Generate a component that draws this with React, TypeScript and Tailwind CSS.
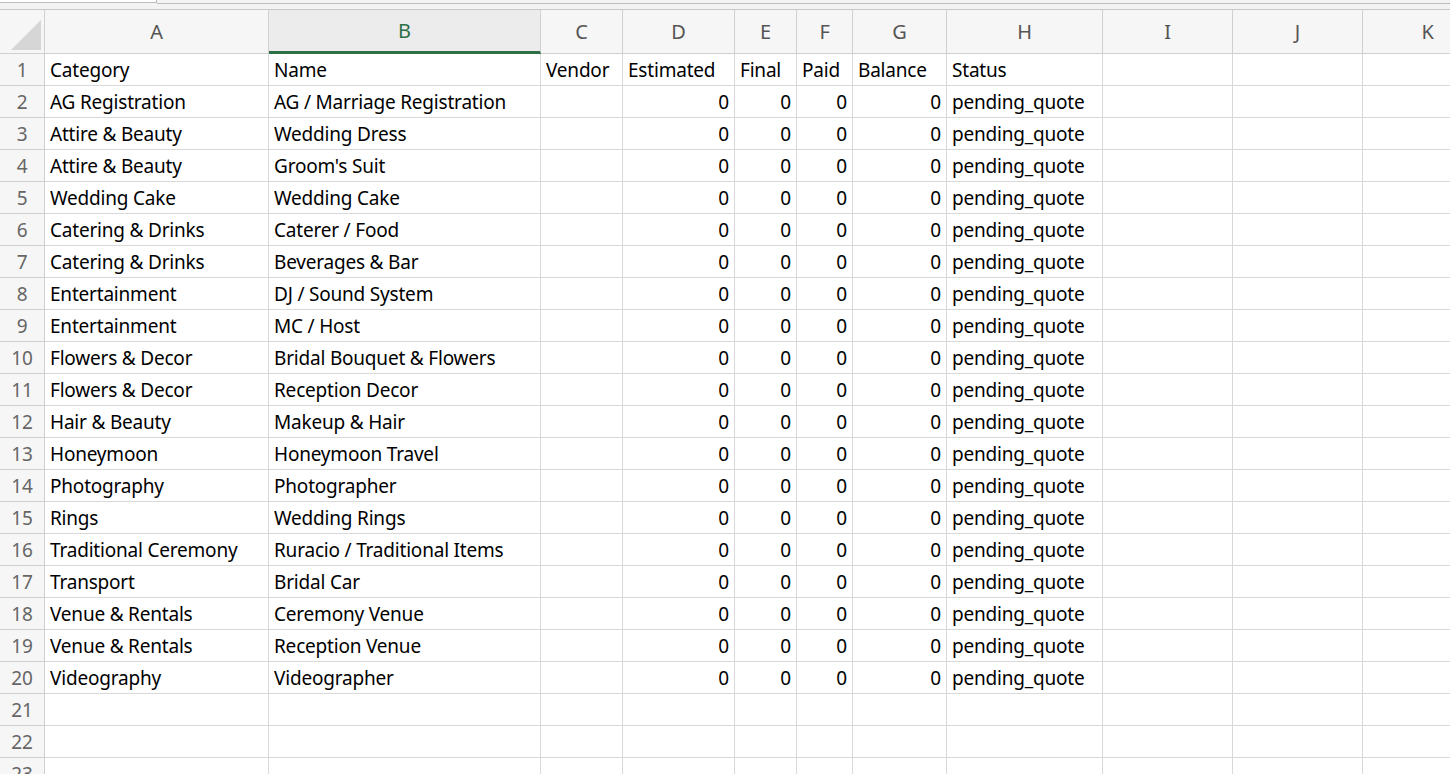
import React from 'react';

const rows: [string, string][] = [
  ['AG Registration', 'AG / Marriage Registration'],
  ['Attire & Beauty', 'Wedding Dress'],
  ['Attire & Beauty', "Groom's Suit"],
  ['Wedding Cake', 'Wedding Cake'],
  ['Catering & Drinks', 'Caterer / Food'],
  ['Catering & Drinks', 'Beverages & Bar'],
  ['Entertainment', 'DJ / Sound System'],
  ['Entertainment', 'MC / Host'],
  ['Flowers & Decor', 'Bridal Bouquet & Flowers'],
  ['Flowers & Decor', 'Reception Decor'],
  ['Hair & Beauty', 'Makeup & Hair'],
  ['Honeymoon', 'Honeymoon Travel'],
  ['Photography', 'Photographer'],
  ['Rings', 'Wedding Rings'],
  ['Traditional Ceremony', 'Ruracio / Traditional Items'],
  ['Transport', 'Bridal Car'],
  ['Venue & Rentals', 'Ceremony Venue'],
  ['Venue & Rentals', 'Reception Venue'],
  ['Videography', 'Videographer'],
];

const cols = ['A', 'B', 'C', 'D', 'E', 'F', 'G', 'H', 'I', 'J', 'K'];
const grid = 'grid grid-cols-[45px_224px_272px_82px_112px_62px_56px_94px_156px_130px_130px_130px]';
const cell = 'h-8 border-r border-b border-[#d9d9d9] px-[5px] leading-[33px] whitespace-nowrap overflow-hidden';
const rowHead = 'h-8 border-r border-b border-[#d0d0d0] bg-[#f6f6f6] text-[#666] text-center leading-[33px]';

const App: React.FC = () => {
  const all: string[][] = [
    ['Category', 'Name', 'Vendor', 'Estimated', 'Final', 'Paid', 'Balance', 'Status', '', '', ''],
    ...rows.map(([c, n]) => [c, n, '', '0', '0', '0', '0', 'pending_quote', '', '', '']),
    ['', '', '', '', '', '', '', '', '', '', ''],
    ['', '', '', '', '', '', '', '', '', '', ''],
    ['', '', '', '', '', '', '', '', '', '', ''],
  ];
  return (
    <div className="w-[1450px] h-[774px] overflow-hidden bg-white text-[19px] text-black font-['Roboto',sans-serif] tracking-[-0.2px]">
      {/* formula strip remnant */}
      <div className="relative h-[10px] bg-[#f3f3f3] border-b border-[#c8c8c8]">
        <div className="absolute left-0 top-0 w-[157px] h-[3px] bg-white border-r border-b border-[#bdbdbd]" />
        <div className="absolute left-[157px] right-0 top-[3px] border-t border-[#bdbdbd]" />
      </div>
      <div className={grid}>
        <div className="h-[44px] bg-[#f6f6f6] border-r border-b border-[#d0d0d0] relative">
          <svg className="absolute right-[3px] bottom-[3px]" width="30" height="30" viewBox="0 0 30 30">
            <polygon points="30,0 30,30 0,30" fill="#d6d6d6" />
          </svg>
        </div>
        {cols.map((c) => (
          <div
            key={c}
            className={
              c === 'B'
                ? 'h-[44px] bg-[#ececec] border-r border-[#d0d0d0] border-b-[3px] border-b-[#2e7046] text-[#2e7046] text-center leading-[42px] text-[20px]'
                : 'h-[44px] bg-[#f6f6f6] border-r border-b border-[#d0d0d0] text-[#555] text-center leading-[43px] text-[20px]'
            }
          >
            {c}
          </div>
        ))}
        {all.map((r, i) => (
          <React.Fragment key={i}>
            <div className={rowHead}>{i + 1}</div>
            {r.map((v, j) => (
              <div key={j} className={`${cell} ${j >= 3 && j <= 6 && i > 0 ? 'text-right' : ''}`}>
                {v}
              </div>
            ))}
          </React.Fragment>
        ))}
      </div>
    </div>
  );
};

export default App;
